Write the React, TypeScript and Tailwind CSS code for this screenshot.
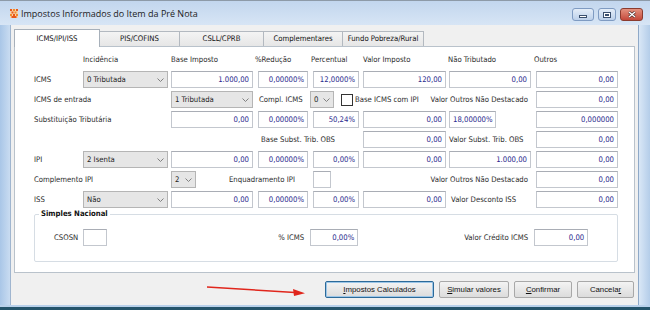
import React from 'react';

function Box({ v = '', w, left = false }: { v?: string; w: string; left?: boolean }) {
  return (
    <div
      className={`${w} h-[17px] bg-white border border-[#c3c7ce] border-t-[#a9adb5] flex items-center px-[3px] whitespace-nowrap text-[#2a2a8e] ${
        left ? 'justify-start' : 'justify-end'
      }`}
    >
      {v}
    </div>
  );
}

function Combo({ v, w }: { v: string; w: string }) {
  return (
    <div className={`${w} h-[17px] bg-[#e6e6e6] border border-[#b5b5b5] flex items-center justify-between pl-[3px] pr-[3px] whitespace-nowrap text-[#222]`}>
      <span>{v}</span>
      <svg width="7" height="4" viewBox="0 0 7 4">
        <path d="M0.5 0.5 L3.5 3.5 L6.5 0.5" fill="none" stroke="#808080" strokeWidth="1" />
      </svg>
    </div>
  );
}

function Btn({ children, w, main = false }: { children: React.ReactNode; w: string; main?: boolean }) {
  return (
    <div
      className={`${w} h-[17px] rounded-[2px] flex items-center justify-center bg-gradient-to-b from-[#f3f3f3] to-[#dcdcdc] text-[#111] font-['Liberation_Sans',Arial,sans-serif] text-[7.8px] ${
        main ? 'border border-[#2c6a99] shadow-[inset_0_0_0_1px_#9cc6e8]' : 'border border-[#a8a8a8]'
      }`}
    >
      {children}
    </div>
  );
}

const tabs = [
  { name: 'PIS/COFINS', w: 'w-[81px]' },
  { name: 'CSLL/CPRB', w: 'w-[85px]' },
  { name: 'Complementares', w: 'w-[80px]' },
  { name: 'Fundo Pobreza/Rural', w: 'w-[82px]' },
];

export default function App() {
  return (
    <div className="relative w-[650px] h-[310px] overflow-hidden bg-[#bfd5ed] flex flex-col font-['DejaVu_Sans_Condensed','DejaVu_Sans',sans-serif] text-[7.7px] leading-none text-[#2b2b2b]">
      {/* title bar */}
      <div className="h-[25px] shrink-0 flex items-center border-t border-[#8d9aa8] bg-gradient-to-b from-[#c2d6ee] to-[#d7e5f5]">
        <svg className="ml-[10px]" width="8" height="9" viewBox="0 0 8 9">
          <rect x="0" y="0" width="8" height="9" fill="#f6d2a8" />
          <rect x="0" y="0" width="2" height="2" fill="#e8581c" />
          <rect x="3" y="0" width="2" height="2" fill="#f08a2c" />
          <rect x="6" y="0" width="2" height="2" fill="#e8581c" />
          <rect x="1.5" y="2.5" width="2" height="2" fill="#e8581c" />
          <rect x="4.5" y="2.5" width="2" height="2" fill="#f08a2c" />
          <rect x="0" y="5" width="2" height="2" fill="#f08a2c" />
          <rect x="3" y="5" width="2" height="2" fill="#e8581c" />
          <rect x="6" y="5" width="2" height="2" fill="#f08a2c" />
          <rect x="1.5" y="7" width="5" height="2" fill="#e8581c" />
        </svg>
        <span className="ml-[3px] font-['Open_Sans',sans-serif] text-[9px] text-[#1b1b1b]">Impostos Informados do Item da Pré Nota</span>
        <div className="ml-auto mr-[7px] self-start mt-[7px] flex gap-[4px]">
          <div className="w-[22px] h-[13px] rounded-[3px] border border-[#7f9bc2] bg-gradient-to-b from-[#e4edf8] to-[#bcd0ea] flex items-center justify-center">
            <div className="w-[8px] h-[3px] mt-[4px] bg-white border border-[#3a4f6e]" />
          </div>
          <div className="w-[18px] h-[13px] rounded-[3px] border border-[#7f9bc2] bg-gradient-to-b from-[#e4edf8] to-[#bcd0ea] flex items-center justify-center">
            <div className="w-[8px] h-[6px] bg-white border border-[#3a4f6e] flex items-center justify-center">
              <div className="w-[4px] h-[2px] border border-[#3a4f6e]" />
            </div>
          </div>
          <div className="w-[23px] h-[13px] rounded-[3px] border border-[#8b3b2e] bg-gradient-to-b from-[#e3917f] to-[#c4473a] flex items-center justify-center">
            <svg width="8" height="7" viewBox="0 0 8 7">
              <path d="M1 1 L7 6 M7 1 L1 6" stroke="#3a2020" strokeWidth="2.6" />
              <path d="M1 1 L7 6 M7 1 L1 6" stroke="#fff" strokeWidth="1.5" />
            </svg>
          </div>
        </div>
      </div>

      {/* body */}
      <div className="flex h-[280px] shrink-0">
        <div className="w-[10px] bg-gradient-to-r from-[#a9c6e7] to-[#c9dcf1]" />
        <div className="w-[628px] bg-[#f0f0f0] border-l border-[#9fb5cf] flex flex-col pt-[4px]">
          {/* tabs */}
          <div className="ml-[3px] h-[17px] flex items-end">
            <div className="relative z-10 -mb-px w-[86px] h-[18px] bg-white border border-b-0 border-[#a7b0ba] flex items-center justify-center text-[#111]">
              ICMS/IPI/ISS
            </div>
            {tabs.map((t) => (
              <div
                key={t.name}
                className={`${t.w} -ml-px h-[15px] bg-gradient-to-b from-[#f4f4f4] to-[#e6e6e6] border border-b-0 border-[#b3b9c0] flex items-center justify-center text-[#111]`}
              >
                {t.name}
              </div>
            ))}
          </div>

          {/* panel */}
          <div className="mx-[3px] h-[227px] bg-white border border-[#b9c2cb] pl-[19px] pt-[4px]">
            <div className="grid grid-cols-[49px_88px_87px_55px_50px_86px_87px_82px] auto-rows-[17px] gap-y-[3px] items-center whitespace-nowrap">
              <div />
              <div>Incidência</div>
              <div>Base Imposto</div>
              <div className="-ml-[3px]">%Redução</div>
              <div className="-ml-[2px]">Percentual</div>
              <div>Valor Imposto</div>
              <div className="-ml-[1px]">Não Tributado</div>
              <div className="-ml-[2px]">Outros</div>

              <div>ICMS</div>
              <Combo v="0 Tributada" w="w-[85px]" />
              <Box v="1.000,00" w="w-[82px]" />
              <Box v="0,00000%" w="w-[50px]" />
              <Box v="12,0000%" w="w-[46px]" />
              <Box v="120,00" w="w-[83px]" />
              <Box v="0,00" w="w-[82px]" />
              <Box v="0,00" w="w-[82px]" />

              <div className="col-span-2">ICMS de entrada</div>
              <Combo v="1 Tributada" w="w-[82px]" />
              <div className="col-span-3 flex items-center">
                <span className="w-[52px] pl-[1px]">Compl. ICMS</span>
                <Combo v="0" w="w-[24px]" />
                <span className="ml-[7px] w-[12px] h-[12px] border border-[#333] bg-white" />
                <span className="ml-[2px]">Base ICMS com IPI</span>
              </div>
              <div className="flex justify-end pr-[8px]">
                <span>Valor Outros Não Destacado</span>
              </div>
              <Box v="0,00" w="w-[82px]" />

              <div className="col-span-2">Substituição Tributária</div>
              <Box v="0,00" w="w-[82px]" />
              <Box v="0,00000%" w="w-[50px]" />
              <Box v="50,24%" w="w-[46px]" />
              <Box v="0,00" w="w-[83px]" />
              <Box v="18,00000%" w="w-[47px]" left />
              <Box v="0,000000" w="w-[82px]" />

              <div className="col-start-4 col-span-2 pl-[3px]">Base Subst. Trib. OBS</div>
              <Box v="0,00" w="w-[83px]" />
              <div>Valor Subst. Trib. OBS</div>
              <Box v="0,00" w="w-[82px]" />

              <div>IPI</div>
              <Combo v="2 Isenta" w="w-[85px]" />
              <Box v="0,00" w="w-[82px]" />
              <Box v="0,00000%" w="w-[50px]" />
              <Box v="0,00%" w="w-[46px]" />
              <Box v="0,00" w="w-[83px]" />
              <Box v="1.000,00" w="w-[82px]" />
              <Box v="0,00" w="w-[82px]" />

              <div className="col-span-2">Complemento IPI</div>
              <div className="col-span-2 flex items-center">
                <Combo v="2" w="w-[25px]" />
                <span className="ml-[33px]">Enquadramento IPI</span>
              </div>
              <Box w="w-[18px]" />
              <div className="col-span-2 text-right pr-[8px]">Valor Outros Não Destacado</div>
              <Box v="0,00" w="w-[82px]" />

              <div>ISS</div>
              <Combo v="Não" w="w-[85px]" />
              <Box v="0,00" w="w-[82px]" />
              <Box v="0,00000%" w="w-[50px]" />
              <Box v="0,00%" w="w-[46px]" />
              <Box v="0,00" w="w-[83px]" />
              <div className="pl-[2px]">Valor Desconto ISS</div>
              <Box v="0,00" w="w-[82px]" />
            </div>

            <fieldset className="w-[584px] border border-[#d6dde4] rounded-[2px] pt-[9px] pb-[15px] pl-[19px]">
              <legend className="-ml-[15px] px-[2px] h-[12px] leading-[12px] font-bold text-[#111]">Simples Nacional</legend>
              <div className="flex items-center whitespace-nowrap">
                <span>CSOSN</span>
                <div className="ml-[5px]">
                  <Box w="w-[24px]" />
                </div>
                <span className="w-[197px] text-right">% ICMS</span>
                <div className="ml-[6px]">
                  <Box v="0,00%" w="w-[48px]" />
                </div>
                <span className="w-[170px] text-right">Valor Crédito ICMS</span>
                <div className="ml-[6px]">
                  <Box v="0,00" w="w-[54px]" />
                </div>
              </div>
            </fieldset>
          </div>

          {/* buttons */}
          <div className="mt-[8px] pr-[4px] flex justify-end gap-[5px]">
            <Btn w="w-[109px]" main>
              <span><u>I</u>mpostos Calculados</span>
            </Btn>
            <Btn w="w-[70px]">
              <span><u>S</u>imular valores</span>
            </Btn>
            <Btn w="w-[58px]">
              <span><u>C</u>onfirmar</span>
            </Btn>
            <Btn w="w-[57px]">
              <span>Cancela<u>r</u></span>
            </Btn>
          </div>
        </div>
        <div className="flex-1 bg-gradient-to-r from-[#d9e7f6] to-[#b4cde9] border-l border-[#8fa9c8]" />
      </div>
      <div className="h-[2px] shrink-0 bg-[#b8d0ea]" />
      <div className="flex-1 bg-[#24546b]" />

      {/* annotation arrow */}
      <svg className="absolute left-[205px] top-[282px]" width="102" height="16" viewBox="0 0 102 16">
        <path d="M2 5 L90 10.5" stroke="#e0261c" strokeWidth="1.6" fill="none" />
        <path d="M100 11.2 L88 7 L89 14 Z" fill="#e0261c" />
      </svg>
    </div>
  );
}
